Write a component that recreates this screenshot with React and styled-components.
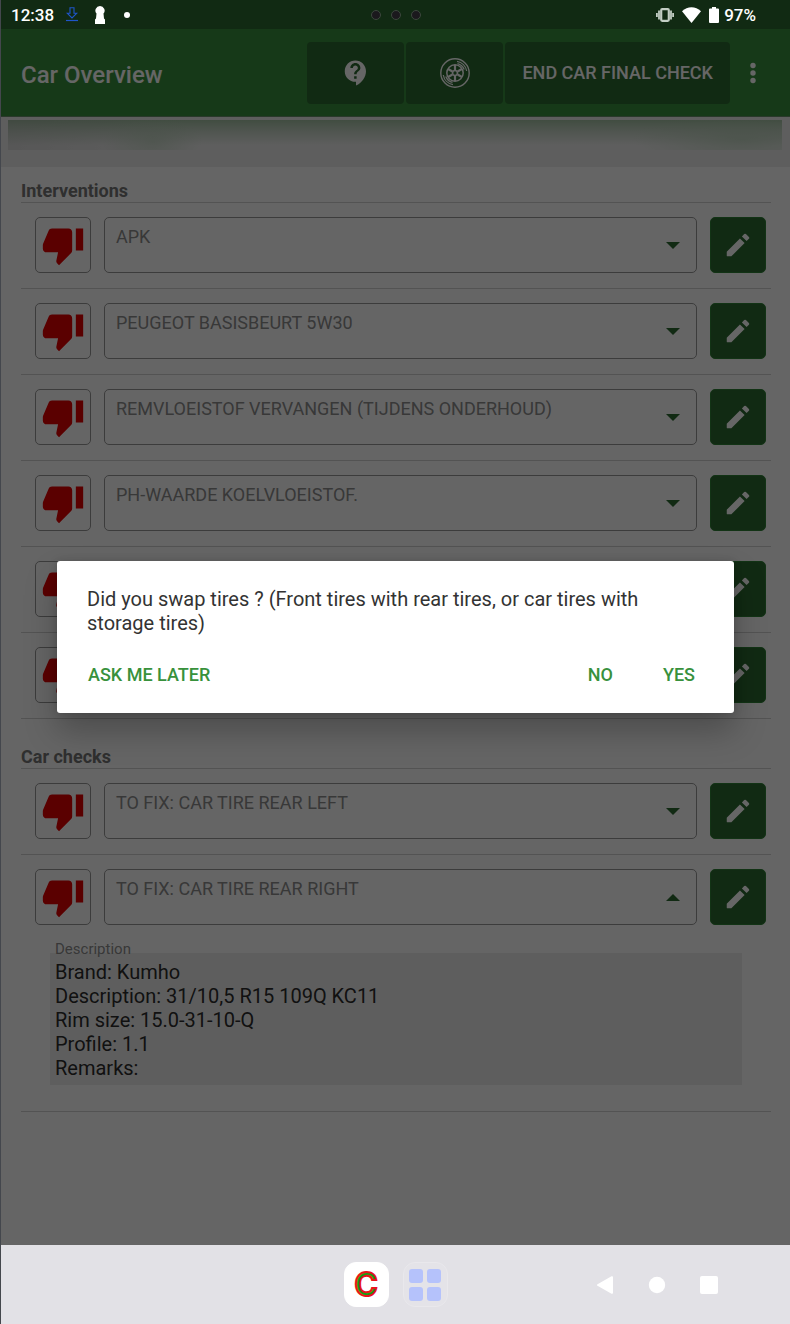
import { useState } from 'react';
import styled, { createGlobalStyle } from 'styled-components';

const interventions = [
  'APK',
  'PEUGEOT BASISBEURT 5W30',
  'REMVLOEISTOF VERVANGEN (TIJDENS ONDERHOUD)',
  'PH-WAARDE KOELVLOEISTOF.',
  '',
  '',
];

const carChecks = [
  { name: 'TO FIX: CAR TIRE REAR LEFT' },
  {
    name: 'TO FIX: CAR TIRE REAR RIGHT',
    open: true,
    description: [
      'Brand: Kumho',
      'Description: 31/10,5 R15 109Q KC11',
      'Rim size: 15.0-31-10-Q',
      'Profile: 1.1',
      'Remarks:',
    ],
  },
];

const ThumbDownIcon = () => (
  <svg width="44" height="44" viewBox="0 0 24 24" fill="currentColor" aria-hidden="true">
    <path d="M15 3H6c-.83 0-1.54.5-1.84 1.22l-3.02 7.05c-.09.23-.14.47-.14.73v2c0 1.1.9 2 2 2h6.31l-.95 4.57-.03.32c0 .41.17.79.44 1.06L9.83 23l6.59-6.59c.36-.36.58-.86.58-1.41V5c0-1.1-.9-2-2-2zm4 0v12h4V3h-4z" />
  </svg>
);

const PencilIcon = () => (
  <svg width="30" height="30" viewBox="0 0 24 24" fill="currentColor" aria-hidden="true">
    <path d="M3 17.46v3.04c0 .28.22.5.5.5h3.04c.13 0 .26-.05.35-.15L17.3 10.45l-3.75-3.75L3.15 17.1c-.1.1-.15.22-.15.36zM20.71 7.04a.996.996 0 0 0 0-1.41l-2.34-2.34a.996.996 0 0 0-1.41 0l-1.83 1.83 3.75 3.75 1.83-1.83z" />
  </svg>
);

const HelpIcon = () => (
  <svg width="30" height="30" viewBox="0 0 24 24" fill="currentColor" aria-hidden="true">
    <path d="M11.5 2C6.81 2 3 5.81 3 10.5S6.81 19 11.5 19h.5v3c4.86-2.34 8-7 8-11.5C20 5.81 16.19 2 11.5 2zm1 14.5h-2v-2h2v2zm0-3.5h-2c0-3.25 3-3 3-5 0-1.1-.9-2-2-2s-2 .9-2 2h-2c0-2.21 1.79-4 4-4s4 1.79 4 4c0 2.5-3 2.75-3 5z" />
  </svg>
);

const WheelIcon = () => (
  <svg width="30" height="30" viewBox="0 0 30 30" fill="none" stroke="currentColor" aria-hidden="true">
    <circle cx="15" cy="15" r="14.2" strokeWidth="1.4" />
    <circle cx="15" cy="15" r="8.2" strokeWidth="1.5" />
    {[0, 60, 120, 180, 240, 300].map((angle) => (
      <path key={angle} d="M15 12V7" strokeWidth="2.2" transform={`rotate(${angle} 15 15)`} />
    ))}
    <circle cx="15" cy="15" r="2.4" strokeWidth="1.5" />
    <path d="M17 3.3A11.8 11.8 0 0 1 26.7 13M17.5 5.6A9.7 9.7 0 0 1 24.2 11.6" strokeWidth="1.3" />
    <path d="M13 26.7A11.8 11.8 0 0 1 3.3 17M12.5 24.4A9.7 9.7 0 0 1 5.8 18.4" strokeWidth="1.3" />
  </svg>
);

const MoreIcon = () => (
  <svg width="6" height="22" viewBox="0 0 6 22" fill="currentColor" aria-hidden="true">
    <circle cx="3" cy="3.5" r="2.7" />
    <circle cx="3" cy="11" r="2.7" />
    <circle cx="3" cy="18.5" r="2.7" />
  </svg>
);

const CaretIcon = ({ up }) => (
  <svg width="14" height="7" viewBox="0 0 14 7" fill="currentColor" aria-hidden="true">
    <path d={up ? 'M0 7 7 0l7 7z' : 'M0 0h14L7 7z'} />
  </svg>
);

const DownloadIcon = () => (
  <svg width="12" height="15" viewBox="0 0 12 15" fill="none" stroke="#1f55c9" aria-hidden="true">
    <path d="M4 .8h4v5.4h2.8L6 11 1.2 6.2H4z" strokeWidth="1.1" />
    <path d="M0 13.5h12" strokeWidth="1.2" />
  </svg>
);

const KeyholeIcon = () => (
  <svg width="12" height="18" viewBox="0 0 12 18" fill="#fff" aria-hidden="true">
    <path d="M6 0a4.6 4.6 0 0 1 3.5 7.6l.5 5 1 1V18H1v-4.4l1-1 .5-5A4.6 4.6 0 0 1 6 0z" />
  </svg>
);

const VibrateIcon = () => (
  <svg width="18" height="14" viewBox="0 0 18 14" aria-hidden="true">
    <rect x="5.2" y="1.2" width="7.6" height="11.6" rx="1" fill="none" stroke="#c3cdc4" strokeWidth="2.2" />
    <path d="M3 2.5v9M15 2.5v9M.9 5v4M17.1 5v4" stroke="#c3cdc4" strokeWidth="1.8" />
  </svg>
);

const WifiIcon = () => (
  <svg width="19" height="16" viewBox="0 0 19 16" fill="#fff" aria-hidden="true">
    <path d="M9.5 16 0 4.2C5.5-1.2 13.5-1.2 19 4.2z" />
  </svg>
);

const BatteryIcon = () => (
  <svg width="10" height="16" viewBox="0 0 10 16" fill="#fff" aria-hidden="true">
    <path d="M3 0h4v1.5h2a1 1 0 0 1 1 1V15a1 1 0 0 1-1 1H1a1 1 0 0 1-1-1V2.5a1 1 0 0 1 1-1h2z" />
  </svg>
);

function CheckRow({ name, open, description }) {
  const [isOpen, setIsOpen] = useState(Boolean(open));

  return (
    <Row>
      <RowControls>
        <ThumbButton type="button" aria-label={`Reject ${name}`}>
          <ThumbDownIcon />
        </ThumbButton>
        <Expander type="button" aria-expanded={isOpen} onClick={() => setIsOpen(!isOpen)}>
          <ExpanderText>{name}</ExpanderText>
          <CaretIcon up={isOpen} />
        </Expander>
        <EditButton type="button" aria-label={`Edit ${name}`}>
          <PencilIcon />
        </EditButton>
      </RowControls>
      {isOpen && description && (
        <Description>
          <DescriptionLabel>Description</DescriptionLabel>
          <DescriptionBox>
            {description.map((line) => (
              <p key={line}>{line}</p>
            ))}
          </DescriptionBox>
        </Description>
      )}
    </Row>
  );
}

function App() {
  return (
    <>
      <GlobalStyle />
      <Device>
        <StatusBar>
          <StatusStart>
            <Clock>12:38</Clock>
            <DownloadIcon />
            <KeyholeIcon />
            <Dot />
          </StatusStart>
          <Cameras>
            <Lens />
            <Lens />
            <Lens />
          </Cameras>
          <StatusEnd>
            <VibrateIcon />
            <WifiIcon />
            <Battery>
              <BatteryIcon />
              97%
            </Battery>
          </StatusEnd>
        </StatusBar>

        <Screen>
          <Header>
            <Title>Car Overview</Title>
            <HeaderActions>
              <HeaderButton type="button" aria-label="Help">
                <HelpIcon />
              </HeaderButton>
              <HeaderButton type="button" aria-label="Tires">
                <WheelIcon />
              </HeaderButton>
              <HeaderButton type="button" $wide>END CAR FINAL CHECK</HeaderButton>
            </HeaderActions>
            <MoreButton type="button" aria-label="More options">
              <MoreIcon />
            </MoreButton>
          </Header>
          <CarBanner>
            <BannerBlur />
          </CarBanner>
          <Content>
            <section>
              <SectionTitle>Interventions</SectionTitle>
              {interventions.map((name, index) => (
                <CheckRow key={index} name={name} />
              ))}
            </section>
            <section>
              <SectionTitle>Car checks</SectionTitle>
              {carChecks.map((check, index) => (
                <CheckRow key={index} {...check} />
              ))}
            </section>
          </Content>

          <Scrim>
            <Dialog role="dialog" aria-modal="true" aria-labelledby="dialog-text">
              <DialogText id="dialog-text">
                Did you swap tires ? (Front tires with rear tires, or car tires with storage tires)
              </DialogText>
              <DialogActions>
                <DialogButton type="button">ASK ME LATER</DialogButton>
                <Answers>
                  <DialogButton type="button">NO</DialogButton>
                  <DialogButton type="button">YES</DialogButton>
                </Answers>
              </DialogActions>
            </Dialog>
          </Scrim>
        </Screen>

        <TaskBar>
          <Apps>
            <AppButton type="button" $solid>C</AppButton>
            <AppButton type="button" aria-label="All apps">
              <svg width="32" height="32" viewBox="0 0 32 32" fill="#b5c2fb" aria-hidden="true">
                <rect width="14" height="14" rx="3" />
                <rect x="18" width="14" height="14" rx="3" />
                <rect y="18" width="14" height="14" rx="3" />
                <rect x="18" y="18" width="14" height="14" rx="3" />
              </svg>
            </AppButton>
          </Apps>
          <SystemNav>
            <NavButton type="button" aria-label="Back">
              <svg width="18" height="18" viewBox="0 0 18 18" fill="#fff" aria-hidden="true">
                <path d="M1.5 8.2 15.5.3q1.5-.6 1.5 1v15.4q0 1.6-1.5 1L1.5 9.8q-1.3-.8 0-1.6z" />
              </svg>
            </NavButton>
            <NavButton type="button" aria-label="Home">
              <svg width="18" height="18" viewBox="0 0 18 18" fill="#fff" aria-hidden="true">
                <circle cx="9" cy="9" r="8.2" />
              </svg>
            </NavButton>
            <NavButton type="button" aria-label="Recent apps">
              <svg width="18" height="18" viewBox="0 0 18 18" fill="#fff" aria-hidden="true">
                <rect width="18" height="18" rx="2" />
              </svg>
            </NavButton>
          </SystemNav>
        </TaskBar>
      </Device>
    </>
  );
}

const GlobalStyle = createGlobalStyle`
  * {
    box-sizing: border-box;
  }
  body {
    margin: 0;
    background: #666;
    font-family: Roboto, "Liberation Sans", sans-serif;
  }
  h1, h2, p {
    margin: 0;
  }
  button {
    display: flex;
    align-items: center;
    justify-content: center;
    padding: 0;
    border: none;
    background: none;
    font-family: inherit;
    cursor: pointer;
  }
  svg {
    display: block;
    flex-shrink: 0;
  }
`;

const Device = styled.div`
  display: flex;
  flex-direction: column;
  min-height: 100vh;
  border-left: 1px solid #44474d;
`;

const StatusBar = styled.div`
  display: grid;
  grid-template-columns: 1fr auto 1fr;
  align-items: center;
  height: 29px;
  background: #112a13;
  color: #fff;
  font-size: 17px;
  font-weight: 500;
`;

const StatusStart = styled.div`
  display: flex;
  align-items: center;
  gap: 16px;
  padding-left: 10px;
`;

const Clock = styled.span`
  margin-right: -4px;
`;

const Dot = styled.span`
  width: 6px;
  height: 6px;
  margin-left: 2px;
  border-radius: 50%;
  background: #fff;
`;

const Cameras = styled.div`
  display: flex;
  gap: 10px;
`;

const Lens = styled.span`
  width: 10px;
  height: 10px;
  border: 1px solid #3b473c;
  border-radius: 50%;
  background: #1b191d;
`;

const StatusEnd = styled.div`
  display: flex;
  align-items: center;
  justify-content: flex-end;
  gap: 8px;
  padding-right: 34px;
`;

const Battery = styled.span`
  display: flex;
  align-items: center;
  gap: 5px;
`;

const Screen = styled.div`
  position: relative;
  display: flex;
  flex: 1;
  flex-direction: column;
  background: #fdfdfd;
`;

const Header = styled.header`
  display: flex;
  align-items: center;
  height: 88px;
  padding: 0 14px 0 20px;
  border-bottom: 1px solid #6a8f6c;
  background: #39903c;
  color: #fff;
`;

const Title = styled.h1`
  flex: 1;
  padding-top: 4px;
  font-size: 24px;
  font-weight: 500;
`;

const HeaderActions = styled.div`
  display: flex;
  gap: 2px;
`;

const HeaderButton = styled.button`
  min-width: 97px;
  height: 62px;
  padding: 0 ${({ $wide }) => ($wide ? '17px' : '0')};
  border-radius: 4px;
  background: #2b6930;
  color: #fff;
  font-size: 18px;
  font-weight: 500;
`;

const MoreButton = styled.button`
  width: 46px;
  height: 62px;
  color: #fff;
`;

const CarBanner = styled.div`
  height: 50px;
  padding: 3px 8px 0 7px;
  background: #ececec;
`;

const BannerBlur = styled.div`
  height: 30px;
  background:
    radial-gradient(50px 26px at 145px 22px, rgba(178, 204, 178, 0.5), transparent),
    radial-gradient(110px 26px at calc(100% - 40px) 20px, rgba(178, 204, 178, 0.6), transparent),
    linear-gradient(to right, rgba(160, 160, 160, 0.25), transparent 180px),
    linear-gradient(#a3c0a3, #c9d6c9 40%, #ececec 85%);
`;

const Content = styled.main`
  display: flex;
  flex-direction: column;
  gap: 14px;
  padding: 0 19px 40px 20px;
`;

const SectionTitle = styled.h2`
  padding-top: 13px;
  border-bottom: 1px solid #cfcfcf;
  color: #757575;
  font-size: 18px;
  font-weight: 700;
  line-height: 22px;
`;

const Row = styled.div`
  padding: 14px 0 15px;
  border-bottom: 1px solid #cfcfcf;
`;

const RowControls = styled.div`
  display: flex;
  gap: 13px;
  padding: 0 5px 0 14px;
`;

const ThumbButton = styled.button`
  width: 56px;
  height: 56px;
  border: 1px solid #969696;
  border-radius: 5px;
  color: #e00000;
`;

const Expander = styled.button`
  flex: 1;
  justify-content: space-between;
  height: 56px;
  padding: 0 16px 0 11px;
  border: 1px solid #969696;
  border-radius: 5px;
  color: #2b6930;
`;

const ExpanderText = styled.span`
  align-self: flex-start;
  padding-top: 8px;
  color: #8c8c8c;
  font-size: 18px;
  line-height: 22px;
`;

const EditButton = styled.button`
  width: 56px;
  height: 56px;
  border: 1px solid #2f8035;
  border-radius: 5px;
  background: #2b6930;
  color: #fff;
`;

const Description = styled.div`
  padding: 16px 29px 11px;
`;

const DescriptionLabel = styled.p`
  margin-bottom: -4px;
  padding-left: 5px;
  color: #8c8c8c;
  font-size: 15px;
  line-height: 16px;
`;

const DescriptionBox = styled.div`
  padding: 7px 5px 5px;
  background: #ececec;
  color: #2c2c2c;
  font-size: 20px;
  line-height: 24px;
`;

const Scrim = styled.div`
  position: absolute;
  inset: 0;
  display: flex;
  align-items: center;
  padding: 0 56px;
  background: rgba(0, 0, 0, 0.6);
`;

const Dialog = styled.div`
  flex: 1;
  border-radius: 3px;
  background: #fff;
  box-shadow: 0 18px 32px rgba(0, 0, 0, 0.25), 0 0 8px rgba(0, 0, 0, 0.15);
`;

const DialogText = styled.p`
  padding: 26px 30px 21px;
  color: #333;
  font-size: 20px;
  line-height: 24px;
`;

const DialogActions = styled.div`
  display: flex;
  justify-content: space-between;
  padding: 0 23px 21px 15px;
`;

const Answers = styled.div`
  display: flex;
  gap: 18px;
`;

const DialogButton = styled.button`
  height: 36px;
  padding: 0 16px;
  color: #38913c;
  font-size: 18px;
  font-weight: 500;
`;

const TaskBar = styled.nav`
  display: grid;
  grid-template-columns: 1fr auto 1fr;
  align-items: center;
  height: 79px;
  background: #e2e1e6;
`;

const Apps = styled.div`
  display: flex;
  grid-column: 2;
  gap: 14px;
`;

const AppButton = styled.button`
  width: 45px;
  height: 45px;
  border: 1px solid ${({ $solid }) => ($solid ? '#fff' : '#e9e8ec')};
  border-radius: 12px;
  background: ${({ $solid }) => ($solid ? '#fff' : '#e4e3e8')};
  color: #14a014;
  font-family: Inter, "Liberation Sans", sans-serif;
  font-size: 32px;
  font-weight: 600;
  line-height: 1;
  -webkit-text-stroke: 2px #e8141c;
`;

const SystemNav = styled.div`
  display: flex;
  justify-content: flex-end;
  padding-right: 55px;
`;

const NavButton = styled.button`
  width: 52px;
  height: 48px;
`;

export default App;
